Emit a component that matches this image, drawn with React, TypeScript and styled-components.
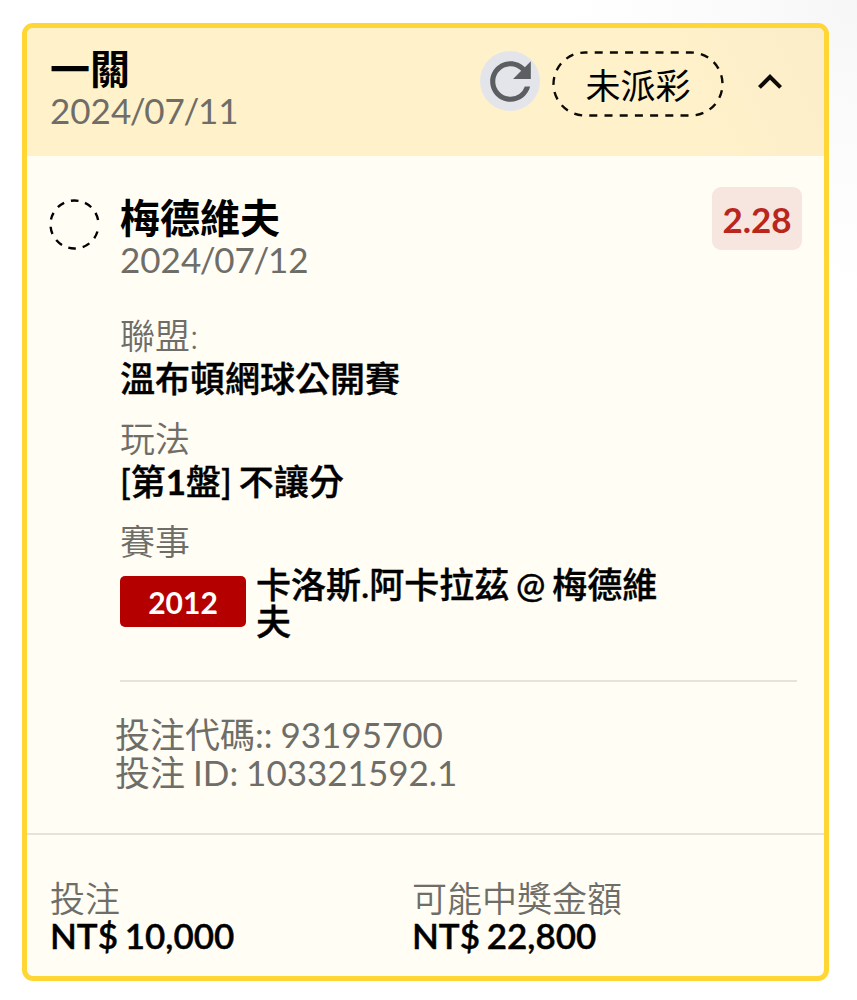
import React from "react";
import styled, { createGlobalStyle } from "styled-components";

const GlobalStyle = createGlobalStyle`
  *, *::before, *::after { box-sizing: border-box; }
  body {
    margin: 0;
    min-height: 1000px;
    background: radial-gradient(circle at 857px 0, #f6f6f6 0, #fafafa 90px, #fff 300px) #fff;
    font-family: Lato, "Noto Sans CJK TC", sans-serif;
    color: #000;
  }
`;

const Page = styled.main`
  height: 1000px;
  padding: 23px 28px 19px 22px;
`;

const Card = styled.article`
  display: flex;
  flex-direction: column;
  height: 958px;
  border: 5px solid #ffd633;
  border-radius: 11px;
  background: #fffdf4;
  overflow: hidden;
`;

const Header = styled.header`
  display: flex;
  align-items: flex-start;
  height: 128px;
  padding: 21px 30.5px 0 23px;
  background: linear-gradient(245deg, #faedc8 0, #fff1ca 150px);
`;

const Title = styled.h2`
  margin: 0;
  font-size: 40px;
  line-height: 40px;
  font-weight: 600;
  white-space: nowrap;
`;

const Line = styled.div<{ $weight?: number; $top?: number }>`
  margin-top: ${(p) => p.$top ?? 0}px;
  font-size: 35px;
  line-height: 38px;
  font-weight: ${(p) => p.$weight ?? 350};
  color: ${(p) => (p.$weight ? "#000" : "#6e6d68")};
  -webkit-text-stroke: ${(p) => (p.$weight ? "0.4px #000" : "0")};
  word-spacing: -2px;
  white-space: nowrap;
`;

const DateLine = styled(Line)`
  font-weight: 400;
  margin-top: 2px;
`;

const Slash = styled.span`
  margin: 0 -1.4px;
`;

const Grow = styled.div`
  flex: 1;
`;

const RefreshButton = styled.button`
  display: flex;
  align-items: center;
  justify-content: center;
  width: 60px;
  height: 60px;
  margin: 2px 12px 0 0;
  padding: 0;
  border: 0;
  border-radius: 50%;
  background: #e4e5ea;
  color: #5c5f61;
  svg { flex: none; }
`;

const StatusPill = styled.div`
  position: relative;
  width: 172px;
  height: 66px;
  margin-top: 2px;
  font-size: 35px;
  line-height: 68px;
  font-weight: 400;
  text-align: center;
`;

const PillOutline = styled.svg`
  position: absolute;
  inset: 0;
`;

const Toggle = styled.button`
  display: flex;
  margin: 9px 0 0 21.5px;
  padding: 0;
  border: 0;
  background: none;
`;

const Selection = styled.section`
  display: grid;
  grid-template-columns: 70px 1fr auto;
  align-items: start;
  padding: 31px 22px 0 23px;
`;

const PendingMark = styled.svg`
  margin: 12px 0 0 -1px;
`;

const Names = styled.div`
  padding-top: 11px;
`;

const Odds = styled.div`
  width: 90px;
  height: 63px;
  border-radius: 9px;
  background: #f7e6e0;
  color: #b9261e;
  font-size: 35px;
  line-height: 64px;
  font-weight: 700;
  text-align: center;
`;

const Details = styled.section`
  display: flex;
  flex-direction: column;
  margin: 38px 27px 0 93px;
  border-bottom: 2px solid #e7e3dc;
  height: 366px;
`;

const Match = styled.div`
  display: flex;
  margin-top: 6px;
`;

const Tag = styled.span`
  width: 126px;
  height: 51px;
  margin: 10px 10px 0 0;
  border-radius: 5px;
  background: #b50000;
  color: #fff;
  font-size: 30px;
  line-height: 52px;
  font-weight: 700;
  text-align: center;
`;

const Players = styled(Line)`
  width: 420px;
  line-height: 37px;
  white-space: normal;
`;

const Codes = styled.section`
  padding: 33px 0 0 88px;
  height: 151px;
`;

const CodeLine = styled(Line)`
  font-weight: 400;
  word-spacing: -1px;
`;

const Footer = styled.footer`
  flex: 1;
  display: grid;
  grid-template-columns: 362px 1fr;
  border-top: 2px solid #e7e3dc;
  padding: 44px 0 0 23px;
`;

const circleDashes = Array(9).fill("18 16.9").join(" ") + " 18 27.9";

const details = [
  { label: "聯盟:", value: <>溫布頓網球公開賽</> },
  { label: "玩法", value: <>[第<b>1</b>盤] 不讓分</> },
];

const totals = [
  { label: "投注", value: "NT$ 10,000" },
  { label: "可能中獎金額", value: "NT$ 22,800" },
];

function DateText({ value }: { value: string }) {
  const [year, month, day] = value.split("/");
  return (
    <DateLine>
      {year}
      <Slash>/</Slash>
      {month}
      <Slash>/</Slash>
      {day}
    </DateLine>
  );
}

export default function App() {
  return (
    <Page>
      <GlobalStyle />
      <Card>
        <Header>
          <div>
            <Title>一關</Title>
            <DateText value="2024/07/11" />
          </div>
          <Grow />
          <RefreshButton>
            <svg width="61" height="61" viewBox="0 0 24 24" fill="currentColor">
              <path d="M17.65 6.35C16.2 4.9 14.21 4 12 4c-4.42 0-7.99 3.58-7.99 8s3.57 8 7.99 8c3.73 0 6.84-2.55 7.73-6h-2.08A5.99 5.99 0 0 1 12 18c-3.31 0-6-2.69-6-6s2.69-6 6-6c1.66 0 3.14.69 4.22 1.78L13 11h7V4l-2.35 2.35z" />
            </svg>
          </RefreshButton>
          <StatusPill>
            <PillOutline width="172" height="66" fill="none" stroke="#0c0a04" strokeWidth="2.4">
              <rect x="1.5" y="1.5" width="169" height="63" rx="31.5" strokeDasharray="8 7.2" strokeDashoffset="5.5" />
            </PillOutline>
            未派彩
          </StatusPill>
          <Toggle>
            <svg width="48" height="48" viewBox="0 0 24 24" fill="#0c0a04">
              <path d="M12 8l-6 6 1.41 1.41L12 10.83l4.59 4.58L18 14z" />
            </svg>
          </Toggle>
        </Header>

        <Selection>
          <PendingMark width="51" height="51" fill="none" stroke="#000" strokeWidth="2.4">
            <circle
              cx="25.5"
              cy="25.5"
              r="24"
              pathLength="360"
              strokeDasharray={circleDashes}
              transform="rotate(17 25.5 25.5)"
            />
          </PendingMark>
          <Names>
            <Title>梅德維夫</Title>
            <DateText value="2024/07/12" />
          </Names>
          <Odds>2.28</Odds>
        </Selection>

        <Details>
          {details.map((d, i) => (
            <React.Fragment key={d.label}>
              <Line $top={i ? 22 : 0}>{d.label}</Line>
              <Line $weight={500} $top={5}>{d.value}</Line>
            </React.Fragment>
          ))}
          <Line $top={22}>賽事</Line>
          <Match>
            <Tag>2012</Tag>
            <Players $weight={500}>卡洛斯.阿卡拉茲 @ 梅德維夫</Players>
          </Match>
        </Details>

        <Codes>
          <CodeLine>投注代碼:: 93195700</CodeLine>
          <CodeLine>投注 ID: 103321592.1</CodeLine>
        </Codes>

        <Footer>
          {totals.map((t) => (
            <div key={t.label}>
              <Line>{t.label}</Line>
              <Line $weight={600} $top={-1}>{t.value}</Line>
            </div>
          ))}
        </Footer>
      </Card>
    </Page>
  );
}
